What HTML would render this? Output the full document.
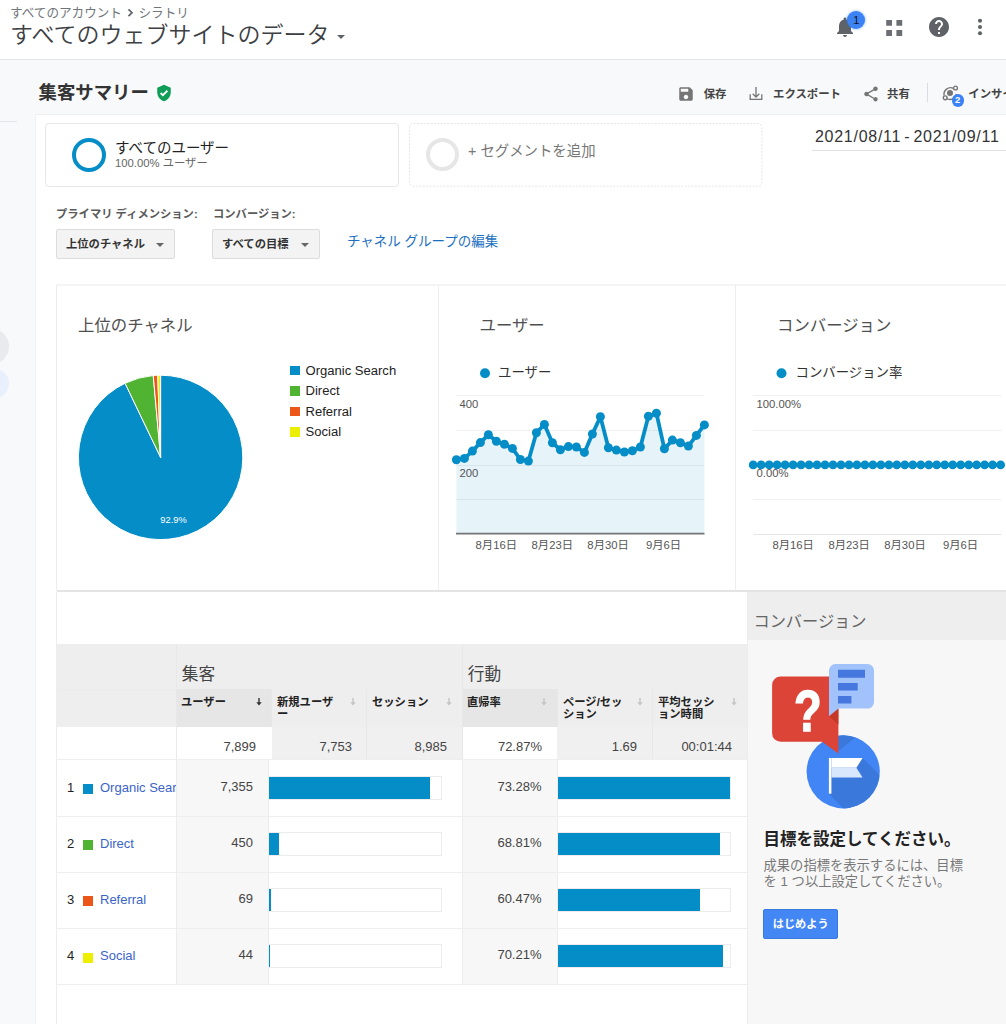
<!DOCTYPE html>
<html lang="ja"><head><meta charset="utf-8"><title>アナリティクス</title>
<style>
*{box-sizing:border-box;margin:0;padding:0}
html,body{width:1006px;height:1024px;overflow:hidden;background:#f8f9fa;font-family:"Liberation Sans","Noto Sans CJK JP",sans-serif;color:#222}
.a{position:absolute;white-space:nowrap}
#hdr{left:0;top:0;width:1006px;height:60px;background:#fff;border-bottom:1px solid #e3e5e8}
#panel{left:35px;top:114px;width:971px;height:910px;background:#fff;border-left:1px solid #f2f3f4;border-top:1px solid #eeeff0}
.t{font-family:"Liberation Sans","Noto Sans CJK JP",sans-serif}

.tb{font-size:11.400px;font-weight:bold;color:#444;line-height:16px}
.btn{height:30px;background:#f3f3f3;border:1px solid #dcdcdc;border-radius:2px;font-size:11.300px;font-weight:bold;color:#333;line-height:28px;padding-left:9px}
.btn i{position:absolute;right:10px;top:13px;width:0;height:0;border-left:4px solid transparent;border-right:4px solid transparent;border-top:4px solid #666}

.ct{font-size:16.400px;color:#505050;line-height:24px}
.cl{font-size:13.400px;color:#333;line-height:20px}
.lg{left:290.300px;width:9.800px;height:9.800px;margin-top:.600px}
.lt{left:305.500px;font-size:13.050px;margin-top:.600px;color:#222;line-height:16px;font-family:"Liberation Sans",sans-serif}
.vl{width:1px;background:#e8e8e8}
.hl{left:57px;width:690px;height:1px;background:#eeeeee}
.gh{font-size:16.700px;color:#444;line-height:24px}
.th{font-size:11.300px;font-weight:bold;color:#222;line-height:12.500px}
.sa{font-size:9px;color:#bbb;line-height:12px;font-family:"DejaVu Sans",sans-serif}
.num{font-size:13px;color:#444;text-align:right;line-height:16px;font-family:"Liberation Sans",sans-serif}
.rn{font-size:13px;color:#222;line-height:16px}
.rl{font-size:13px;color:#3b64c8;line-height:16px;width:76px;overflow:hidden;font-family:"Liberation Sans",sans-serif}
.rv{font-size:13px;color:#444;text-align:right;line-height:16px;font-family:"Liberation Sans",sans-serif}
.bar{height:24px;border:1px solid #ececec;background:#fff}
.bar b{position:absolute;left:0;top:0;height:22px;background:#058dc7;display:block}
</style></head><body>
<div class="a" id="hdr"></div>
<div class="a t" style="left:10px;top:5px;font-size:12.600px;color:#70757a;line-height:16px">すべてのアカウント</div>
<svg class="a" style="left:125px;top:6px" width="12" height="14" viewBox="0 0 12 14"><path d="M3.500 3.300L7 6.700 3.500 10.100" fill="none" stroke="#5f6368" stroke-width="1.700"/></svg>
<div class="a t" style="left:138.500px;top:5px;font-size:12.600px;color:#70757a;line-height:16px">シラトリ</div>
<div class="a t" style="left:10px;top:20px;font-size:23px;font-weight:350;color:#3c4043;line-height:30px">すべてのウェブサイトのデータ</div>
<div class="a" style="left:337px;top:35px;width:0;height:0;border-left:4px solid transparent;border-right:4px solid transparent;border-top:4px solid #5f6368"></div>

<div class="a" style="left:0;top:121px;width:17px;height:1px;background:#e3e5e8"></div>
<div class="a t" style="left:38.500px;top:80px;font-size:18.400px;font-weight:bold;color:#333;line-height:26px">集客サマリー</div>
<div class="a" id="panel"></div>
<!-- header icons -->
<svg class="a" style="left:833px;top:14.700px" width="24" height="24" viewBox="0 0 24 24"><path fill="#5f6368" d="M12 22c1.1 0 2-.9 2-2h-4c0 1.1.9 2 2 2zm6-6v-5c0-3.07-1.63-5.64-4.5-6.32V4c0-.83-.67-1.5-1.5-1.5s-1.500.67-1.500 1.500v.68C7.640 5.360 6 7.920 6 11v5l-2 2v1h16v-1l-2-2z"/></svg>
<div class="a" style="left:847px;top:10.800px;width:18.400px;height:18.400px;border-radius:50%;background:#3b82f4;box-shadow:0 0 3px rgba(26,115,232,.6);color:#111;font-size:11px;line-height:18px;text-align:center">1</div>
<svg class="a" style="left:886px;top:20.200px" width="18" height="18" viewBox="0 0 18 18"><path fill="#6b6f73" d="M.2 0h5.800v5.800H.2zM10.400 0h5.800v5.800h-5.800zM.2 10.100h5.800v5.800H.2zM10.400 10.100h5.800v5.800h-5.800z"/></svg>
<svg class="a" style="left:926.700px;top:15.300px" width="24" height="24" viewBox="0 0 24 24"><path fill="#5f6368" d="M12 2C6.480 2 2 6.480 2 12s4.480 10 10 10 10-4.480 10-10S17.520 2 12 2zm1 17h-2v-2h2v2zm2.070-7.750l-.9.920C13.450 12.900 13 13.500 13 15h-2v-.500c0-1.100.450-2.100 1.170-2.830l1.240-1.260c.370-.360.590-.860.590-1.410 0-1.100-.9-2-2-2s-2 .9-2 2H8c0-2.210 1.790-4 4-4s4 1.790 4 4c0 .880-.360 1.680-.930 2.250z"/></svg>
<svg class="a" style="left:968px;top:14.800px" width="24" height="24" viewBox="0 0 24 24"><circle cx="12" cy="5.800" r="2.050" fill="#5f6368"/><circle cx="12" cy="12" r="2.050" fill="#5f6368"/><circle cx="12" cy="18.200" r="2.050" fill="#5f6368"/></svg>

<!-- toolbar -->
<svg class="a" style="left:155px;top:84px" width="18" height="18" viewBox="0 0 24 24"><path fill="#0f9d58" d="M12 1L3 5v6c0 5.550 3.840 10.740 9 12 5.160-1.260 9-6.450 9-12V5l-9-4z"/><path fill="none" stroke="#fff" stroke-width="2.400" d="M7.500 12l3 3 6-6"/></svg>
<svg class="a" style="left:677.300px;top:84.500px" width="18" height="18" viewBox="0 0 24 24"><path fill="#757575" d="M17 3H5c-1.110 0-2 .9-2 2v14c0 1.100.890 2 2 2h14c1.100 0 2-.9 2-2V7l-4-4zm-5 16c-1.660 0-3-1.340-3-3s1.340-3 3-3 3 1.340 3 3-1.340 3-3 3zm3-10H5V5h10v4z"/></svg>
<div class="a t tb" style="left:703.700px;top:85.700px">保存</div>
<svg class="a" style="left:747px;top:84.500px" width="18" height="18" viewBox="0 0 18 18"><path fill="none" stroke="#757575" stroke-width="1.300" d="M9 2V12M5.700 8.700L9 12l3.300-3.300M3.200 9.200v5.200h11.600V9.200"/></svg>
<div class="a t tb" style="left:773px;top:85.700px">エクスポート</div>
<svg class="a" style="left:861.700px;top:84.500px" width="18" height="18" viewBox="0 0 24 24"><path fill="#757575" d="M18 16.080c-.760 0-1.440.300-1.960.770L8.910 12.700c.050-.230.090-.460.090-.700s-.040-.470-.090-.700l7.050-4.110c.540.500 1.250.810 2.040.810 1.660 0 3-1.340 3-3s-1.340-3-3-3-3 1.340-3 3c0 .240.040.470.090.700L8.040 9.810C7.500 9.310 6.790 9 6 9c-1.660 0-3 1.340-3 3s1.340 3 3 3c.790 0 1.500-.310 2.040-.810l7.120 4.160c-.050.210-.080.430-.080.650 0 1.610 1.310 2.920 2.920 2.920 1.610 0 2.920-1.310 2.920-2.920s-1.310-2.920-2.920-2.920z"/></svg>
<div class="a t tb" style="left:887px;top:85.700px">共有</div>
<div class="a" style="left:927px;top:83px;width:1px;height:19px;background:#dadce0"></div>
<svg class="a" style="left:938px;top:81px" width="24" height="24" viewBox="0 0 24 24"><g fill="none" stroke="#757575" stroke-width="1.400"><path d="M15.300 7.300A6.600 6.600 0 0 0 6.100 14.500M8.700 17.500A6.600 6.600 0 0 0 18.500 13"/><circle cx="17.500" cy="7" r="1.900"/><circle cx="7.200" cy="16.800" r="1.900"/></g><circle cx="12" cy="12" r="3" fill="#757575"/></svg>
<div class="a" style="left:951.500px;top:94.300px;width:12.400px;height:12.400px;border-radius:50%;background:#3b82f6;color:#fff;font-size:9.500px;font-weight:bold;line-height:12.400px;text-align:center;border:0">2</div>
<div class="a t tb" style="left:968.300px;top:85.700px">インサイト</div>

<!-- segments -->
<div class="a" style="left:45px;top:123px;width:354px;height:63.500px;border:1px solid #e7e7e7;border-radius:4px"></div>
<div class="a" style="left:72px;top:137.800px;width:34px;height:34px;border-radius:50%;border:4.500px solid #058dc7"></div>
<div class="a t" style="left:115px;top:139px;font-size:14.500px;color:#222;line-height:18px">すべてのユーザー</div>
<div class="a t" style="left:115px;top:156px;font-size:11.300px;color:#666;line-height:14px">100.00% ユーザー</div>
<svg class="a" style="left:400px;top:120px" width="370" height="70"><rect x="9.500" y="3.500" width="352.500" height="62.700" rx="4" fill="none" stroke="#e6e6e6" stroke-width="1" stroke-dasharray="2 1.400"/></svg>
<div class="a" style="left:425.700px;top:137.600px;width:33px;height:33px;border-radius:50%;border:4px solid #e6e6e6"></div>
<div class="a t" style="left:468px;top:140.600px;font-size:14.400px;color:#777;line-height:20px">+ セグメントを追加</div>
<div class="a t" style="left:815px;top:126px;font-size:16px;color:#333;line-height:22px;letter-spacing:.720px;word-spacing:-2px">2021/08/11 - 2021/09/11</div>
<div class="a" style="left:812px;top:150px;width:194px;height:1px;background:#e0e0e0"></div>

<!-- dimension controls -->
<div class="a t" style="left:56px;top:206px;font-size:11.300px;font-weight:bold;color:#5a5a5a;line-height:16px">プライマリ ディメンション:</div>
<div class="a t" style="left:213px;top:206px;font-size:11.300px;font-weight:bold;color:#5a5a5a;line-height:16px">コンバージョン:</div>
<div class="a btn" style="left:56px;top:229px;width:119px"><span>上位のチャネル</span><i></i></div>
<div class="a btn" style="left:212px;top:229px;width:108px"><span>すべての目標</span><i></i></div>
<div class="a t" style="left:347px;top:232px;font-size:13.500px;color:#1c6fc0;line-height:20px">チャネル グループの編集</div>


<!-- charts container -->
<div class="a" style="left:57px;top:284px;width:949px;height:2px;background:#f4f4f4"></div><div class="a" style="left:56px;top:285px;width:1px;height:306px;background:#ededed"></div>
<div class="a" style="left:438px;top:285px;width:1px;height:306px;background:#eeeeee"></div>
<div class="a" style="left:735px;top:285px;width:1px;height:306px;background:#eeeeee"></div>
<div class="a t ct" style="left:78px;top:313px">上位のチャネル</div>
<div class="a t ct" style="left:479.500px;top:313px">ユーザー</div>
<div class="a t ct" style="left:777px;top:313px">コンバージョン</div>
<div class="a t cl" style="left:498px;top:363px">ユーザー</div>
<div class="a t cl" style="left:795.500px;top:363px">コンバージョン率</div>
<div class="a lg" style="top:365px;background:#058dc7"></div><div class="a lt" style="top:362px">Organic Search</div>
<div class="a lg" style="top:385.500px;background:#50b432"></div><div class="a lt" style="top:382.500px">Direct</div>
<div class="a lg" style="top:406px;background:#ed561b"></div><div class="a lt" style="top:403px">Referral</div>
<div class="a lg" style="top:426.500px;background:#edef00"></div><div class="a lt" style="top:423.500px">Social</div>

<svg class="a" style="left:0;top:0" width="1006" height="1024" viewBox="0 0 1006 1024">
<g><path d="M160.6,457.4L160.60,375.20A82.2,82.2 0 1 1 125.09,383.27Z" fill="#058dc7" stroke="#fff" stroke-width="1"/><path d="M160.6,457.4L125.09,383.27A82.2,82.2 0 0 1 153.24,375.53Z" fill="#50b432" stroke="#fff" stroke-width="1"/><path d="M160.6,457.4L153.24,375.53A82.2,82.2 0 0 1 157.73,375.25Z" fill="#ed561b" stroke="#fff" stroke-width="1"/><path d="M160.6,457.4L157.73,375.25A82.2,82.2 0 0 1 160.60,375.20Z" fill="#edef00" stroke="#fff" stroke-width="1"/></g>
<text x="173.500" y="523.300" font-size="9.300" fill="#fff" text-anchor="middle" font-family="Liberation Sans, sans-serif">92.9%</text>
<g fill="none" stroke="#f0f0f0" stroke-width="1">
<path d="M456.500 395.500H704.500M456.500 430.500H704.500M456.500 465.500H704.500M456.500 499.500H704.500"/>
<path d="M753 395.500H1001.500M753 430.500H1001.500M753 465.500H1001.500M753 499.500H1001.500"/>
</g>
<path d="M456.4,533 L456.4,459.8 L464.4,458.4 L472.4,451.1 L480.4,442.6 L488.4,434.7 L496.4,441.3 L504.4,444.3 L512.4,448.4 L520.4,459.5 L528.4,461.1 L536.4,432.7 L544.4,424.5 L552.4,442.7 L560.4,449.7 L568.4,446.6 L576.4,447.0 L584.4,452.4 L592.4,434.0 L600.4,416.8 L608.4,447.7 L616.4,450.1 L624.4,452.0 L632.4,450.7 L640.4,447.0 L648.4,416.2 L656.4,413.2 L664.4,448.8 L672.4,440.1 L680.4,442.7 L688.4,446.1 L696.4,435.4 L704.4,424.9 L704.4,533 Z" fill="#058dc7" fill-opacity="0.100"/>
<path d="M753 534.500H1001.500" stroke="#e6e6e6" stroke-width="1"/><path d="M456 533.600H704.500" stroke="#757575" stroke-width="1.800"/>
<polyline points="456.4,459.8 464.4,458.4 472.4,451.1 480.4,442.6 488.4,434.7 496.4,441.3 504.4,444.3 512.4,448.4 520.4,459.5 528.4,461.1 536.4,432.7 544.4,424.5 552.4,442.7 560.4,449.7 568.4,446.6 576.4,447.0 584.4,452.4 592.4,434.0 600.4,416.8 608.4,447.7 616.4,450.1 624.4,452.0 632.4,450.7 640.4,447.0 648.4,416.2 656.4,413.2 664.4,448.8 672.4,440.1 680.4,442.7 688.4,446.1 696.4,435.4 704.4,424.9" fill="none" stroke="#058dc7" stroke-width="3.800" stroke-linejoin="round"/>
<g fill="#058dc7"><circle cx="456.4" cy="459.8" r="4.500"/><circle cx="464.4" cy="458.4" r="4.500"/><circle cx="472.4" cy="451.1" r="4.500"/><circle cx="480.4" cy="442.6" r="4.500"/><circle cx="488.4" cy="434.7" r="4.500"/><circle cx="496.4" cy="441.3" r="4.500"/><circle cx="504.4" cy="444.3" r="4.500"/><circle cx="512.4" cy="448.4" r="4.500"/><circle cx="520.4" cy="459.5" r="4.500"/><circle cx="528.4" cy="461.1" r="4.500"/><circle cx="536.4" cy="432.7" r="4.500"/><circle cx="544.4" cy="424.5" r="4.500"/><circle cx="552.4" cy="442.7" r="4.500"/><circle cx="560.4" cy="449.7" r="4.500"/><circle cx="568.4" cy="446.6" r="4.500"/><circle cx="576.4" cy="447.0" r="4.500"/><circle cx="584.4" cy="452.4" r="4.500"/><circle cx="592.4" cy="434.0" r="4.500"/><circle cx="600.4" cy="416.8" r="4.500"/><circle cx="608.4" cy="447.7" r="4.500"/><circle cx="616.4" cy="450.1" r="4.500"/><circle cx="624.4" cy="452.0" r="4.500"/><circle cx="632.4" cy="450.7" r="4.500"/><circle cx="640.4" cy="447.0" r="4.500"/><circle cx="648.4" cy="416.2" r="4.500"/><circle cx="656.4" cy="413.2" r="4.500"/><circle cx="664.4" cy="448.8" r="4.500"/><circle cx="672.4" cy="440.1" r="4.500"/><circle cx="680.4" cy="442.7" r="4.500"/><circle cx="688.4" cy="446.1" r="4.500"/><circle cx="696.4" cy="435.4" r="4.500"/><circle cx="704.4" cy="424.9" r="4.500"/></g>
<path d="M753.200 464.900H1000.500" stroke="#058dc7" stroke-width="3.800"/>
<g fill="#058dc7"><circle cx="753.2" cy="464.900" r="4.400"/><circle cx="761.2" cy="464.900" r="4.400"/><circle cx="769.2" cy="464.900" r="4.400"/><circle cx="777.1" cy="464.900" r="4.400"/><circle cx="785.1" cy="464.900" r="4.400"/><circle cx="793.1" cy="464.900" r="4.400"/><circle cx="801.1" cy="464.900" r="4.400"/><circle cx="809.1" cy="464.900" r="4.400"/><circle cx="817.0" cy="464.900" r="4.400"/><circle cx="825.0" cy="464.900" r="4.400"/><circle cx="833.0" cy="464.900" r="4.400"/><circle cx="841.0" cy="464.900" r="4.400"/><circle cx="849.0" cy="464.900" r="4.400"/><circle cx="856.9" cy="464.900" r="4.400"/><circle cx="864.9" cy="464.900" r="4.400"/><circle cx="872.9" cy="464.900" r="4.400"/><circle cx="880.9" cy="464.900" r="4.400"/><circle cx="888.9" cy="464.900" r="4.400"/><circle cx="896.8" cy="464.900" r="4.400"/><circle cx="904.8" cy="464.900" r="4.400"/><circle cx="912.8" cy="464.900" r="4.400"/><circle cx="920.8" cy="464.900" r="4.400"/><circle cx="928.8" cy="464.900" r="4.400"/><circle cx="936.7" cy="464.900" r="4.400"/><circle cx="944.7" cy="464.900" r="4.400"/><circle cx="952.7" cy="464.900" r="4.400"/><circle cx="960.7" cy="464.900" r="4.400"/><circle cx="968.7" cy="464.900" r="4.400"/><circle cx="976.6" cy="464.900" r="4.400"/><circle cx="984.6" cy="464.900" r="4.400"/><circle cx="992.6" cy="464.900" r="4.400"/><circle cx="1000.6" cy="464.900" r="4.400"/></g>
<circle cx="485" cy="373.300" r="5" fill="#058dc7"/>
<circle cx="781.500" cy="373.300" r="5" fill="#058dc7"/>
<g font-family="Liberation Sans, Noto Sans CJK JP, sans-serif" font-size="11.300" fill="#555">
<text x="459.500" y="407.700">400</text><text x="459.500" y="477.300">200</text>
<text x="756.500" y="407.700">100.00%</text><text x="756.500" y="477.300">0.00%</text>
<g text-anchor="middle" font-size="11.300">
<text x="496.300" y="549">8月16日</text><text x="552.300" y="549">8月23日</text><text x="608.100" y="549">8月30日</text><text x="663.600" y="549">9月6日</text>
<text x="793.200" y="549">8月16日</text><text x="849.200" y="549">8月23日</text><text x="905" y="549">8月30日</text><text x="960.600" y="549">9月6日</text>
</g></g>
</svg>

<!-- table -->
<div class="a" style="left:57px;top:590px;width:949px;height:2px;background:#e4e4e4"></div>
<div class="a" style="left:56px;top:592px;width:1px;height:432px;background:#ededed"></div>
<div class="a" style="left:57px;top:644px;width:690px;height:83px;background:#eeeeee"></div><div class="a" style="left:57px;top:689px;width:119px;height:1px;background:#ebebeb"></div>
<div class="a" style="left:176px;top:644px;width:286px;height:83px;background:#eeeeee"></div>
<div class="a" style="left:462px;top:644px;width:285px;height:83px;background:#eeeeee"></div>
<div class="a" style="left:176px;top:689px;width:95.500px;height:38px;background:#e6e6e6"></div>
<div class="a" style="left:462px;top:689px;width:96px;height:38px;background:#e6e6e6"></div>
<div class="a vl" style="left:176px;top:644px;height:83px"></div>
<div class="a vl" style="left:462px;top:644px;height:83px"></div>
<div class="a vl" style="left:271.300px;top:689px;height:38px"></div>
<div class="a vl" style="left:366.300px;top:689px;height:38px"></div>
<div class="a vl" style="left:557px;top:689px;height:38px"></div>
<div class="a vl" style="left:652px;top:689px;height:38px"></div>
<div class="a t gh" style="left:181.800px;top:663px">集客</div>
<div class="a t gh" style="left:467.800px;top:663px">行動</div>
<div class="a t th" style="left:181px;top:695.500px">ユーザー</div><svg class="a" style="left:256.3px;top:697.500px" width="6" height="8" viewBox="0 0 6 8"><path d="M2.300 0h1.400v4.300H5.700L3 7.500.3 4.300H2.300z" fill="#333"/></svg>
<div class="a t th" style="left:277px;top:695.500px">新規ユーザ<br>ー</div><svg class="a" style="left:350.3px;top:697.500px" width="6" height="8" viewBox="0 0 6 8"><path d="M2.300 0h1.400v4.300H5.700L3 7.500.3 4.300H2.300z" fill="#c4c4c4"/></svg>
<div class="a t th" style="left:372px;top:695.500px">セッション</div><svg class="a" style="left:446.3px;top:697.500px" width="6" height="8" viewBox="0 0 6 8"><path d="M2.300 0h1.400v4.300H5.700L3 7.500.3 4.300H2.300z" fill="#c4c4c4"/></svg>
<div class="a t th" style="left:467px;top:695.500px">直帰率</div><svg class="a" style="left:541.3px;top:697.500px" width="6" height="8" viewBox="0 0 6 8"><path d="M2.300 0h1.400v4.300H5.700L3 7.500.3 4.300H2.300z" fill="#c4c4c4"/></svg>
<div class="a t th" style="left:563px;top:695.500px">ページ/セッ<br>ション</div><svg class="a" style="left:637.3px;top:697.500px" width="6" height="8" viewBox="0 0 6 8"><path d="M2.300 0h1.400v4.300H5.700L3 7.500.3 4.300H2.300z" fill="#c4c4c4"/></svg>
<div class="a t th" style="left:658px;top:695.500px">平均セッシ<br>ョン時間</div><svg class="a" style="left:731.3px;top:697.500px" width="6" height="8" viewBox="0 0 6 8"><path d="M2.300 0h1.400v4.300H5.700L3 7.500.3 4.300H2.300z" fill="#c4c4c4"/></svg>
<!-- totals -->
<div class="a" style="left:271.500px;top:727px;width:190.500px;height:33px;background:#f0f0f0"></div>
<div class="a" style="left:557px;top:727px;width:190px;height:33px;background:#f0f0f0"></div>
<div class="a vl" style="left:176px;top:727px;height:33px;background:#e9e9e9"></div>
<div class="a vl" style="left:366.300px;top:727px;height:33px"></div>
<div class="a vl" style="left:462px;top:727px;height:33px"></div>
<div class="a vl" style="left:652px;top:727px;height:33px"></div>
<div class="a num" style="left:176px;top:738.800px;width:80px">7,899</div>
<div class="a num" style="left:272px;top:738.800px;width:80px">7,753</div>
<div class="a num" style="left:367px;top:738.800px;width:80px">8,985</div>
<div class="a num" style="left:462px;top:738.800px;width:80px">72.87%</div>
<div class="a num" style="left:557px;top:738.800px;width:80px">1.69</div>
<div class="a num" style="left:652px;top:738.800px;width:80px">00:01:44</div>
<!-- rows -->
<div class="a" style="left:176px;top:760px;width:93px;height:224px;background:#f7f7f7;border-left:1px solid #ececec;border-right:1px solid #ececec"></div>
<div class="a" style="left:462px;top:760px;width:96px;height:224px;background:#f7f7f7;border-left:1px solid #ececec;border-right:1px solid #ececec"></div>
<div class="a hl" style="top:759px"></div><div class="a hl" style="top:815.500px"></div><div class="a hl" style="top:871.500px"></div><div class="a hl" style="top:928px"></div><div class="a hl" style="top:984px"></div>
<div class="a rn" style="left:67px;top:779.8px">1</div><div class="a" style="left:82.500px;top:784.0px;width:10px;height:10px;background:#058dc7"></div><div class="a rl" style="left:100px;top:779.8px">Organic Search</div>
<div class="a rv" style="left:176px;top:778.5px;width:77px">7,355</div><div class="a bar" style="left:268px;top:775.5px;width:174px"><b style="width:161.0px"></b></div>
<div class="a rv" style="left:462px;top:778.5px;width:79.500px">73.28%</div><div class="a bar" style="left:557px;top:775.5px;width:174px"><b style="width:172.0px"></b></div>
<div class="a rn" style="left:67px;top:835.8px">2</div><div class="a" style="left:82.500px;top:840.0px;width:10px;height:10px;background:#50b432"></div><div class="a rl" style="left:100px;top:835.8px">Direct</div>
<div class="a rv" style="left:176px;top:834.5px;width:77px">450</div><div class="a bar" style="left:268px;top:831.5px;width:174px"><b style="width:9.8px"></b></div>
<div class="a rv" style="left:462px;top:834.5px;width:79.500px">68.81%</div><div class="a bar" style="left:557px;top:831.5px;width:174px"><b style="width:162.0px"></b></div>
<div class="a rn" style="left:67px;top:892.1999999999999px">3</div><div class="a" style="left:82.500px;top:896.4px;width:10px;height:10px;background:#ed561b"></div><div class="a rl" style="left:100px;top:892.1999999999999px">Referral</div>
<div class="a rv" style="left:176px;top:890.9px;width:77px">69</div><div class="a bar" style="left:268px;top:887.9px;width:174px"><b style="width:1.5px"></b></div>
<div class="a rv" style="left:462px;top:890.9px;width:79.500px">60.47%</div><div class="a bar" style="left:557px;top:887.9px;width:174px"><b style="width:142.2px"></b></div>
<div class="a rn" style="left:67px;top:948.3px">4</div><div class="a" style="left:82.500px;top:952.5px;width:10px;height:10px;background:#edef00"></div><div class="a rl" style="left:100px;top:948.3px">Social</div>
<div class="a rv" style="left:176px;top:947.0px;width:77px">44</div><div class="a bar" style="left:268px;top:944.0px;width:174px"><b style="width:1.0px"></b></div>
<div class="a rv" style="left:462px;top:947.0px;width:79.500px">70.21%</div><div class="a bar" style="left:557px;top:944.0px;width:174px"><b style="width:165.4px"></b></div>

<!-- right panel -->
<div class="a" style="left:747px;top:592px;width:259px;height:432px;background:#f7f7f7;border-left:1px solid #ececec"></div>
<div class="a" style="left:747px;top:592px;width:259px;height:48px;background:#eee"></div>
<div class="a t" style="left:753.500px;top:609px;font-size:16.200px;color:#666;line-height:24px">コンバージョン</div>
<svg class="a" style="left:747px;top:640px" width="259" height="200" viewBox="0 0 259 200">
<circle cx="96.200" cy="131.800" r="36.600" fill="#4285f4"/>
<clipPath id="cc"><circle cx="96.200" cy="131.800" r="36.600"/></clipPath>
<path clip-path="url(#cc)" d="M84.400 118H115.600L160 162.400L128 200L81.900 153.700Z" fill="#3b78db"/>
<path clip-path="url(#cc)" d="M91.400 94L109 97L91.400 111Z" fill="#3b78db"/><path d="M33.600 36.400h57.800V113.400L75 101.700H33.600a8.500 8.500 0 0 1-8.500-8.500V44.900a8.500 8.500 0 0 1 8.500-8.500z" fill="#db4437"/>
<path d="M82 76.200L91.400 68.600V84.500z" fill="#c53929"/>
<path d="M88.500 24h32a6.500 6.500 0 0 1 6.500 6.500v31.600a6.500 6.500 0 0 1-6.500 6.500H91.400L82 76.200V30.500a6.500 6.500 0 0 1 6.500-6.500z" fill="#a1c2fa"/>
<path d="M91 29.800h27v7.900H91zM91 43.100h19.700v7.500H91zM91 56h13.400v7.400H91z" fill="#4577df"/>
<path d="M81.900 118h2.500v35.700h-2.500z" fill="#fff"/>
<path d="M84.400 118h31.200l-6.200 9.700H84.400z" fill="#fff"/>
<path d="M84.400 127.700h25l6.200 9.800H84.400z" fill="#d8e7fc"/>
<text transform="translate(60.750 90.800) scale(.78 1)" x="0" y="0" font-size="58" font-weight="bold" fill="#fff" stroke="#fff" stroke-width="1.500" text-anchor="middle" font-family="Liberation Sans, sans-serif">?</text>
</svg>
<div class="a t" style="left:763.500px;top:827px;font-size:16.500px;font-weight:bold;color:#222;line-height:24px">目標を設定してください。</div>
<div class="a t" style="left:763.500px;top:858px;font-size:13.300px;color:#777;line-height:15.600px">成果の指標を表示するには、目標<br>を 1 つ以上設定してください。</div>
<div class="a t" style="left:763.200px;top:909px;width:75px;height:30px;background:#4387f5;border:1px solid #3a78e0;border-radius:2px;color:#fff;font-size:11.200px;font-weight:bold;line-height:28px;text-align:center">はじめよう</div>
<!-- left nav stubs -->
<div class="a" style="left:-30.600px;top:329.300px;width:40px;height:34.600px;border-radius:17.300px;background:#e8eaed"></div>
<div class="a" style="left:-30.600px;top:368.600px;width:40px;height:29.800px;border-radius:15px;background:#e8f0fe"></div>
</body></html>
